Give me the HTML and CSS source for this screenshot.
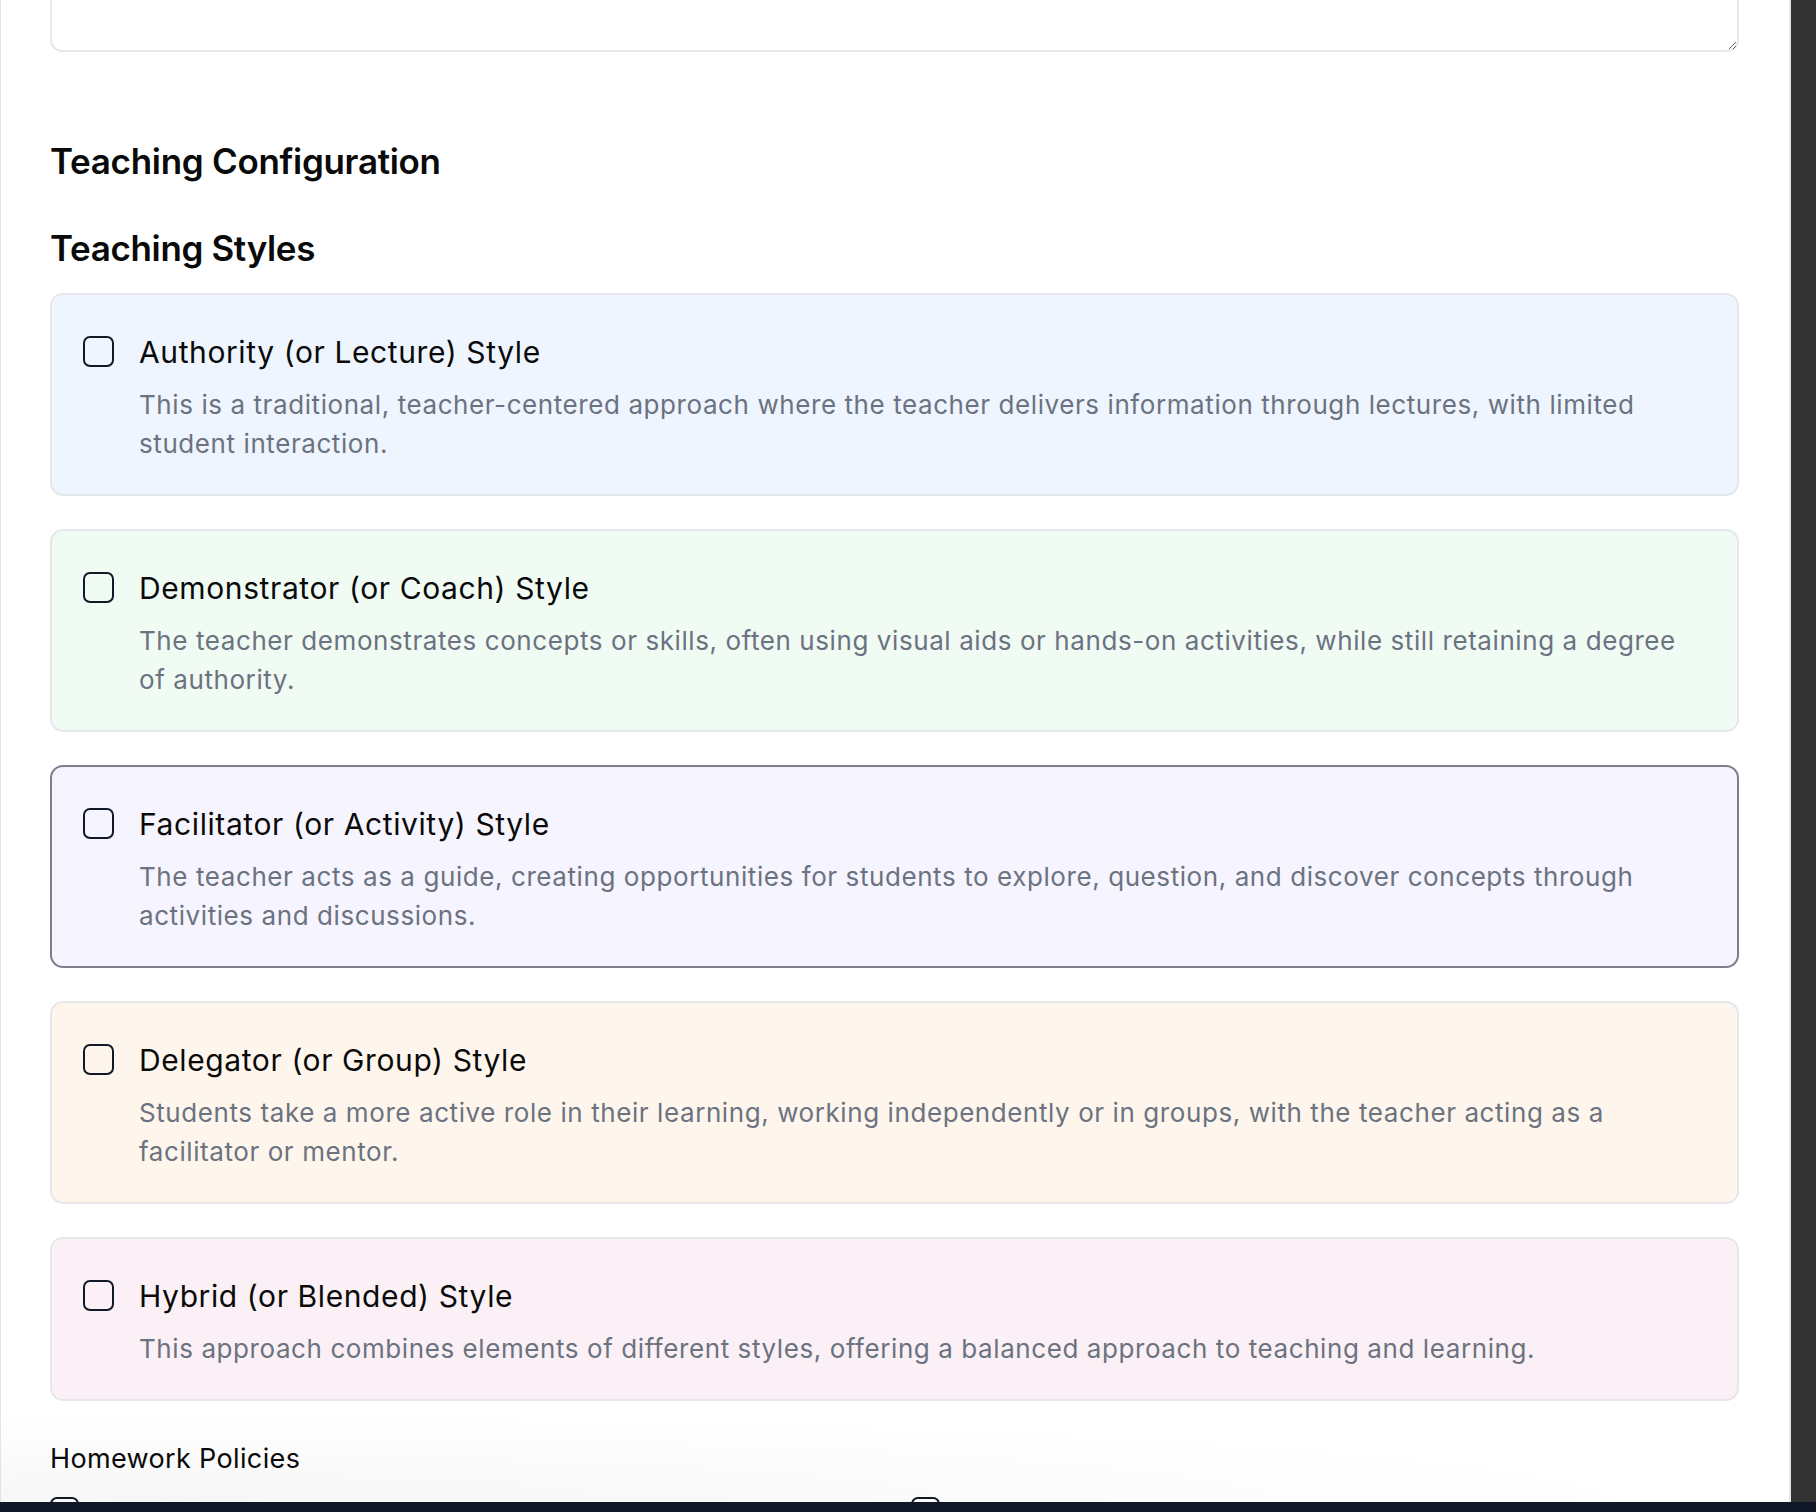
FILE: index.html
```html
<!DOCTYPE html>
<html lang="en">
<head>
<meta charset="utf-8">
<title>Teaching Configuration</title>
<link rel="stylesheet" href="styles.css">
</head>
<body>
<div class="shell">
  <div class="page">
    <div class="content">
      <textarea class="notes" aria-label="Notes"></textarea>

      <h2 class="section-title">Teaching Configuration</h2>
      <h3 class="group-title">Teaching Styles</h3>

      <div class="styles">
        <label class="style-card blue">
          <span class="box"></span>
          <span class="text">
            <span class="name">Authority (or Lecture) Style</span>
            <span class="desc">This is a traditional, teacher-centered approach where the teacher delivers information through lectures, with limited student interaction.</span>
          </span>
        </label>
        <label class="style-card green">
          <span class="box"></span>
          <span class="text">
            <span class="name">Demonstrator (or Coach) Style</span>
            <span class="desc">The teacher demonstrates concepts or skills, often using visual aids or hands-on activities, while still retaining a degree of authority.</span>
          </span>
        </label>
        <label class="style-card violet active">
          <span class="box"></span>
          <span class="text">
            <span class="name">Facilitator (or Activity) Style</span>
            <span class="desc">The teacher acts as a guide, creating opportunities for students to explore, question, and discover concepts through activities and discussions.</span>
          </span>
        </label>
        <label class="style-card orange">
          <span class="box"></span>
          <span class="text">
            <span class="name">Delegator (or Group) Style</span>
            <span class="desc">Students take a more active role in their learning, working independently or in groups, with the teacher acting as a facilitator or mentor.</span>
          </span>
        </label>
        <label class="style-card pink">
          <span class="box"></span>
          <span class="text">
            <span class="name">Hybrid (or Blended) Style</span>
            <span class="desc">This approach combines elements of different styles, offering a balanced approach to teaching and learning.</span>
          </span>
        </label>
      </div>

      <h4 class="sub-title">Homework Policies</h4>
      <div class="policy-grid">
        <div class="policy"><span class="box small"></span></div>
        <div class="policy"><span class="box small"></span></div>
      </div>
    </div>
    <div class="fade"></div>
  </div>
  <div class="gutter"></div>
</div>
<div class="bottom-bar"></div>
</body>
</html>
```

FILE: styles.css
```css
* { box-sizing: border-box; }

html, body {
  margin: 0;
  padding: 0;
  height: 1512px;
  overflow: hidden;
}

body {
  font-family: Inter, "Noto Sans", "Liberation Sans", sans-serif;
  color: #0a0a0a;
  background: #333333;
  display: flex;
  flex-direction: column;
}

.shell {
  display: flex;
  height: 1502px;
}

.page {
  position: relative;
  width: 1791px;
  height: 1502px;
  background: #ffffff;
  border-left: 1px solid #e4e4e4;
  border-right: 2px solid #e4e4e4;
  overflow: hidden;
}

.gutter {
  flex: 1;
  background: #333333;
}

.bottom-bar {
  height: 10px;
  background: #101727;
}

.content {
  padding: 0 49px 0 49px;
}

.notes {
  display: block;
  width: 1689px;
  height: 92px;
  margin: -40px 0 0 0;
  border: 2px solid #e6e7ea;
  border-radius: 12px;
  background: #ffffff;
  resize: vertical;
  font: inherit;
}

.section-title {
  margin: 89px 0 0 0;
  font-size: 35px;
  line-height: 40px;
  font-weight: 600;
  letter-spacing: -0.3px;
}

.group-title {
  margin: 47px 0 0 0;
  font-size: 35px;
  line-height: 40px;
  font-weight: 600;
  letter-spacing: -0.35px;
}

.styles {
  margin-top: 25px;
  width: 1689px;
  display: flex;
  flex-direction: column;
  gap: 33px;
}

.style-card {
  display: flex;
  align-items: flex-start;
  gap: 25px;
  padding: 39px 35px 31px 31px;
  border: 2px solid #e5e7eb;
  border-radius: 13px;
}

.style-card.blue { background: #eef5fe; }
.style-card.green { background: #f0fbf4; }
.style-card.violet { background: #f6f4fe; border-color: #7d7f8d; }
.style-card.orange { background: #fef6ec; }
.style-card.pink { background: #fbf0f6; }

.box {
  flex: none;
  width: 31px;
  height: 31px;
  margin-top: 2px;
  border: 2px solid #111827;
  border-radius: 7px;
  background: transparent;
}

.text {
  display: flex;
  flex-direction: column;
  gap: 15px;
}

.name {
  font-size: 30px;
  line-height: 36px;
  font-weight: 400;
  letter-spacing: 0.6px;
  color: #0a0a0a;
}

.desc {
  font-size: 26px;
  line-height: 39px;
  letter-spacing: 0.58px;
  color: #6b7280;
}

.sub-title {
  margin: 38px 0 0 0;
  font-size: 27px;
  line-height: 40px;
  font-weight: 400;
  letter-spacing: 0.35px;
}

.policy-grid {
  margin-top: 18px;
  display: grid;
  grid-template-columns: 1fr 1fr;
  column-gap: 33px;
  width: 1689px;
}

.policy {
  display: flex;
  align-items: flex-start;
}

.box.small {
  width: 29px;
  height: 29px;
  margin-top: 0;
}

.fade {
  position: absolute;
  left: 0;
  right: 0;
  bottom: 0;
  height: 90px;
  pointer-events: none;
  background: radial-gradient(ellipse 85% 100% at 10% 100%, rgba(0,0,0,0.035), rgba(0,0,0,0) 100%);
}
```
